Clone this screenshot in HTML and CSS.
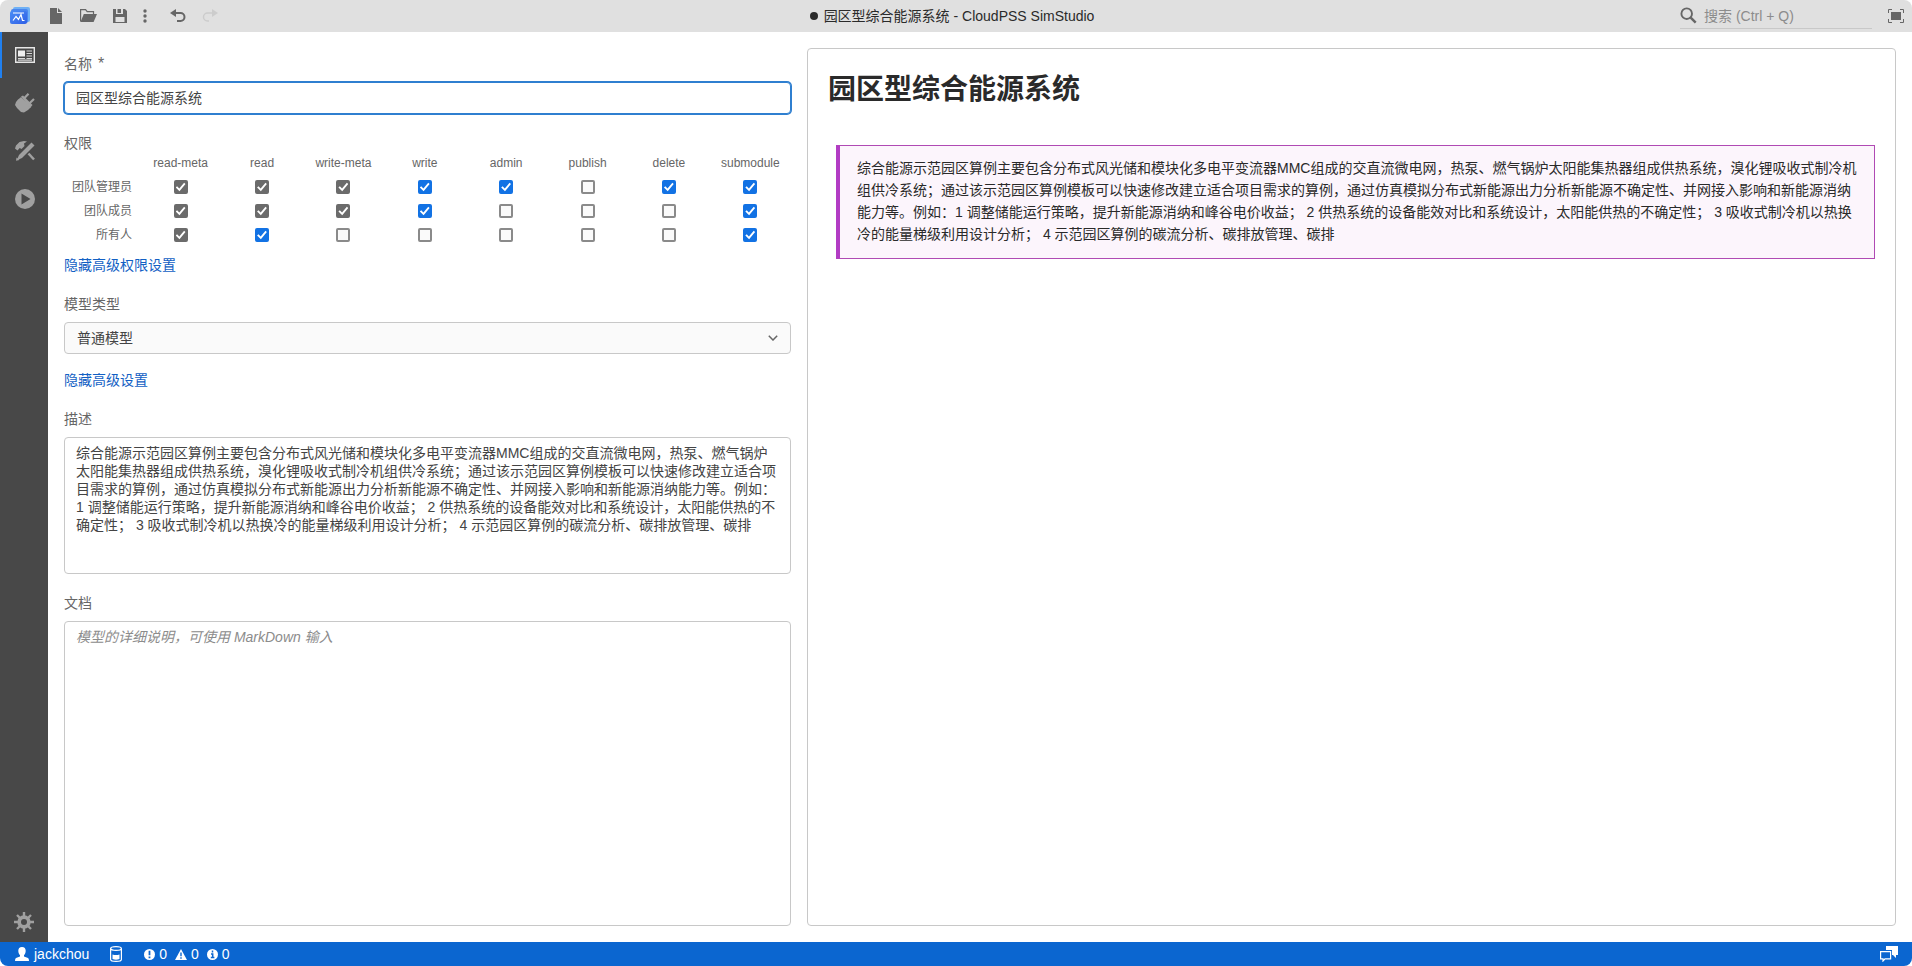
FILE: index.html
```html
<!DOCTYPE html>
<html lang="zh-CN">
<head>
<meta charset="utf-8">
<title>园区型综合能源系统 - CloudPSS SimStudio</title>
<link rel="stylesheet" href="styles.css">
</head>
<body>
<div class="app">
  <header class="topbar">
    <div class="tools">
      <svg class="logo" viewBox="0 0 20 18" aria-hidden="true">
        <defs>
          <linearGradient id="lg" x1="0" y1="0" x2="1" y2="1"><stop offset="0" stop-color="#4b8df5"/><stop offset="1" stop-color="#2f5fe6"/></linearGradient>
        </defs>
        <rect x="3" y="0" width="17" height="15" rx="2" fill="#6fb0f5"/>
        <rect x="1" y="2" width="17" height="14" rx="2" fill="#4a86ee"/>
        <rect x="0" y="4" width="17" height="13" rx="2" fill="url(#lg)"/>
        <path d="M3 6h11M3 13.500l3-4 2.500 3 2.500-5 1.500 6h2" fill="none" stroke="#fff" stroke-width="1.200"/>
      </svg>
      <button class="tool tool-new" aria-label="新建"><svg width="12" height="16" viewBox="0 0 12 16"><path d="M0 0h7v5h5v11H0z" fill="#666"/><path d="M8 0l4 4H8z" fill="#666"/></svg></button>
      <button class="tool tool-open" aria-label="打开"><svg width="17" height="14" viewBox="0 0 17 14"><path d="M.6 12.500V.7h5l1.600 2h6.300v2.500" fill="none" stroke="#666" stroke-width="1.200"/><path d="M3.800 5H17l-3.400 8H.5z" fill="#666"/></svg></button>
      <button class="tool tool-save" aria-label="保存"><svg width="14" height="14" viewBox="0 0 14 14"><path d="M0 0h12l2 2v12H0z" fill="#666"/><path d="M3 0h7v5H3zM2.500 8h9v5h-9z" fill="#e0e0e0"/><path d="M4.500 0h3.500v4H4.500z" fill="#666"/></svg></button>
      <button class="tool tool-more" aria-label="更多"><svg width="4" height="14" viewBox="0 0 4 14" fill="#666"><circle cx="2" cy="2" r="1.700"/><circle cx="2" cy="7" r="1.700"/><circle cx="2" cy="12" r="1.700"/></svg></button>
      <button class="tool tool-undo" aria-label="撤销"><svg width="16" height="14" viewBox="0 0 16 14"><path d="M6 0v8L0 4z" fill="#666"/><path d="M4 4h6.500a4 4 0 0 1 0 8H7" fill="none" stroke="#666" stroke-width="2"/></svg></button>
      <button class="tool tool-redo" aria-label="重做" disabled><svg width="16" height="14" viewBox="0 0 16 14"><path d="M10 0v8l6-4z" fill="#ccc"/><path d="M12 4H5.500a4 4 0 0 0 0 8H7" fill="none" stroke="#ccc" stroke-width="1.500"/></svg></button>
    </div>
    <div class="title"><span class="dirty"></span><span>园区型综合能源系统 - CloudPSS SimStudio</span></div>
    <div class="top-right">
      <label class="search">
        <svg width="17" height="17" viewBox="0 0 17 17" fill="none" stroke="#666"><circle cx="6.700" cy="6.700" r="5.300" stroke-width="1.900"/><path d="M10.700 10.700l5 5" stroke-width="2.500"/></svg>
        <input type="text" placeholder="搜索 (Ctrl + Q)" aria-label="搜索">
      </label>
      <button class="tool tool-full" aria-label="全屏"><svg width="16" height="14" viewBox="0 0 16 14"><path d="M3 3h10v8H3z" fill="#666"/><path d="M.5 4V.5H4M12 .5h3.500V4M15.500 10v3.500H12M4 13.500H.5V10" fill="none" stroke="#666"/></svg></button>
    </div>
  </header>

  <div class="body">
    <nav class="sidebar">
      <button class="side active" aria-label="总览"><svg width="20" height="16" viewBox="0 0 20 16"><path d="M.7.700h18.600v14.600H.7z" fill="none" stroke="#e6e6e6" stroke-width="1.400"/><path d="M3 3.500h7v6H3z" fill="#eee"/><path d="M11.500 4H17M11.500 6.500H17M11.500 9H17M3 11.500h7M11.500 11.500H17M3 13.200h14" stroke="#d8d8d8" stroke-width="1.200"/></svg></button>
      <button class="side" aria-label="接口"><svg width="20" height="20" viewBox="0 0 20 20" fill="#a0a0a0"><path d="M3 6.500l2-1.500 1-1 10 10-3 3-4 2.500-3-.5-4-4L0 12l1-3z"/><path d="M6 3.500l2-1L17.500 12l-2.500 3z"/><path d="M9 5.500L13.500.8M14 10.800l5-4.800" stroke="#a0a0a0" stroke-width="2.200"/></svg></button>
      <button class="side" aria-label="实现"><svg width="20" height="20" viewBox="0 0 20 20" fill="#a0a0a0"><path d="M0 7.500l1-3L4.500 1 9 0l3 .5-3 2 .5 2.500-3 3-1.800-1-2.200 2.500z"/><path d="M16.500 1.500l3 3L7 17l-4.500 2L2 18.500 4 14z"/><path d="M1.500 16.500l3 2.500-3.500.8z"/><path d="M13.500 12.500l5.500 6" stroke="#a0a0a0" stroke-width="2.500"/></svg></button>
      <button class="side" aria-label="运行"><svg width="20" height="20" viewBox="0 0 20 20"><circle cx="10" cy="10" r="10" fill="#a0a0a0"/><path d="M6.500 4.500v11l9-5.500z" fill="#484848"/></svg></button>
      <button class="side settings" aria-label="设置"><svg width="20" height="20" viewBox="0 0 20 20"><g stroke="#a0a0a0" stroke-width="2.400"><path d="M10 0v20M0 10h20M3 3l14 14M17 3L3 17"/></g><circle cx="10" cy="10" r="6.700" fill="#a0a0a0"/><circle cx="10" cy="10" r="3" fill="#484848"/></svg></button>
    </nav>

    <main class="main">
      <form class="form">
        <section class="field">
          <label class="label" for="name">名称 <span class="req">*</span></label>
          <input class="box name" id="name" type="text" value="园区型综合能源系统">
        </section>

        <section class="field">
          <div class="label tight" id="perm">权限</div>
          <table class="perms" aria-labelledby="perm">
            <thead><tr><td></td><th scope="col">read-meta</th><th scope="col">read</th><th scope="col">write-meta</th><th scope="col">write</th><th scope="col">admin</th><th scope="col">publish</th><th scope="col">delete</th><th scope="col">submodule</th></tr></thead>
            <tbody>
              <tr><th scope="row">团队管理员</th>
                <td><input type="checkbox" aria-label="团队管理员 read-meta" checked disabled></td>
                <td><input type="checkbox" aria-label="团队管理员 read" checked disabled></td>
                <td><input type="checkbox" aria-label="团队管理员 write-meta" checked disabled></td>
                <td><input type="checkbox" aria-label="团队管理员 write" checked></td>
                <td><input type="checkbox" aria-label="团队管理员 admin" checked></td>
                <td><input type="checkbox" aria-label="团队管理员 publish"></td>
                <td><input type="checkbox" aria-label="团队管理员 delete" checked></td>
                <td><input type="checkbox" aria-label="团队管理员 submodule" checked></td></tr>
              <tr><th scope="row">团队成员</th>
                <td><input type="checkbox" aria-label="团队成员 read-meta" checked disabled></td>
                <td><input type="checkbox" aria-label="团队成员 read" checked disabled></td>
                <td><input type="checkbox" aria-label="团队成员 write-meta" checked disabled></td>
                <td><input type="checkbox" aria-label="团队成员 write" checked></td>
                <td><input type="checkbox" aria-label="团队成员 admin"></td>
                <td><input type="checkbox" aria-label="团队成员 publish"></td>
                <td><input type="checkbox" aria-label="团队成员 delete"></td>
                <td><input type="checkbox" aria-label="团队成员 submodule" checked></td></tr>
              <tr><th scope="row">所有人</th>
                <td><input type="checkbox" aria-label="所有人 read-meta" checked disabled></td>
                <td><input type="checkbox" aria-label="所有人 read" checked></td>
                <td><input type="checkbox" aria-label="所有人 write-meta"></td>
                <td><input type="checkbox" aria-label="所有人 write"></td>
                <td><input type="checkbox" aria-label="所有人 admin"></td>
                <td><input type="checkbox" aria-label="所有人 publish"></td>
                <td><input type="checkbox" aria-label="所有人 delete"></td>
                <td><input type="checkbox" aria-label="所有人 submodule" checked></td></tr>
            </tbody>
          </table>
          <a class="link" href="#perm">隐藏高级权限设置</a>
        </section>

        <section class="field">
          <label class="label" for="kind">模型类型</label>
          <div class="select-wrap">
            <select class="box select" id="kind"><option>普通模型</option></select>
            <svg class="chevron" width="10" height="6" viewBox="0 0 10 6"><path d="M.8.800L5 5 9.200.800" fill="none" stroke="#666" stroke-width="1.500"/></svg>
          </div>
          <a class="link spaced" href="#kind">隐藏高级设置</a>
        </section>

        <section class="field">
          <label class="label" for="desc">描述</label>
          <textarea class="box area desc" id="desc">综合能源示范园区算例主要包含分布式风光储和模块化多电平变流器MMC组成的交直流微电网，热泵、燃气锅炉太阳能集热器组成供热系统，溴化锂吸收式制冷机组供冷系统；通过该示范园区算例模板可以快速修改建立适合项目需求的算例，通过仿真模拟分布式新能源出力分析新能源不确定性、并网接入影响和新能源消纳能力等。例如：1 调整储能运行策略，提升新能源消纳和峰谷电价收益； 2 供热系统的设备能效对比和系统设计，太阳能供热的不确定性； 3 吸收式制冷机以热换冷的能量梯级利用设计分析； 4 示范园区算例的碳流分析、碳排放管理、碳排</textarea>
        </section>

        <section class="field grow">
          <label class="label" for="doc">文档</label>
          <textarea class="box area doc" id="doc" placeholder="模型的详细说明，可使用 MarkDown 输入"></textarea>
        </section>
      </form>

      <article class="preview">
        <h1>园区型综合能源系统</h1>
        <blockquote>综合能源示范园区算例主要包含分布式风光储和模块化多电平变流器MMC组成的交直流微电网，热泵、燃气锅炉太阳能集热器组成供热系统，溴化锂吸收式制冷机组供冷系统；通过该示范园区算例模板可以快速修改建立适合项目需求的算例，通过仿真模拟分布式新能源出力分析新能源不确定性、并网接入影响和新能源消纳能力等。例如：1 调整储能运行策略，提升新能源消纳和峰谷电价收益； 2 供热系统的设备能效对比和系统设计，太阳能供热的不确定性； 3 吸收式制冷机以热换冷的能量梯级利用设计分析； 4 示范园区算例的碳流分析、碳排放管理、碳排</blockquote>
      </article>
    </main>
  </div>

  <footer class="status">
    <button class="stat user"><svg width="14" height="14" viewBox="0 0 14 14"><path d="M7 0c2.500 0 3.700 1.500 3.700 3.800C10.700 6 9.800 7.500 9 8.200v1.300l4 1.500q1 .5 1 3H0q0-2.500 1-3l4-1.500V8.200C4.200 7.500 3.300 6 3.300 3.800 3.300 1.500 4.500 0 7 0z" fill="#fff"/></svg>jackchou</button>
    <button class="stat storage" aria-label="存储"><svg width="12" height="16" viewBox="0 0 12 16"><path d="M.6 2.500v11c0 1 2.400 1.900 5.400 1.900s5.400-.9 5.400-1.900v-11" fill="none" stroke="#fff" stroke-width="1.200"/><ellipse cx="6" cy="2.500" rx="5.400" ry="1.900" fill="none" stroke="#fff" stroke-width="1.200"/><path d="M2.500 8.500q3.500 1.200 7 0v4.500q-3.500 1.300-7 0z" fill="#fff"/></svg></button>
    <button class="stat counts">
      <span class="count"><svg width="11" height="11" viewBox="0 0 11 11"><circle cx="5.500" cy="5.500" r="5.500" fill="#fff"/><path d="M5.500 1.800v4.400M5.500 7.400v1.800" stroke="#0b66d0" stroke-width="1.800"/></svg>0</span>
      <span class="count"><svg width="12" height="11" viewBox="0 0 12 11"><path d="M6 0l6 11H0z" fill="#fff"/><path d="M6 3.500v3.700M6 8.200v1.500" stroke="#0b66d0" stroke-width="1.400"/></svg>0</span>
      <span class="count"><svg width="11" height="11" viewBox="0 0 11 11"><circle cx="5.500" cy="5.500" r="5.500" fill="#fff"/><path d="M5.500 1.600v1.800M4 4.900h1.700v3.500M3.800 8.600h3.600" fill="none" stroke="#0b66d0" stroke-width="1.500"/></svg>0</span>
    </button>
    <button class="stat chat" aria-label="消息"><svg width="18" height="16" viewBox="0 0 18 16"><path d="M6 0h12v9h-2v3l-3-3h-1V4H6z" fill="#fff"/><path d="M.6 5.600h10v7.200H5L3 15v-2.200H.6z" fill="none" stroke="#fff" stroke-width="1.200"/></svg></button>
  </footer>
</div>
</body>
</html>
```

FILE: styles.css
```css
* { box-sizing: border-box; }

body {
  margin: 0;
  background: #fff;
  color: #333;
  font: 14px/20px "Liberation Sans", "Noto Sans CJK SC", sans-serif;
}

button {
  border: 0;
  padding: 0;
  background: none;
  color: inherit;
  font: inherit;
}

svg { display: block; flex: none; }

.app {
  display: flex;
  flex-direction: column;
  height: 100vh;
  border-radius: 8px;
  overflow: hidden;
}

/* top bar */
.topbar {
  display: grid;
  grid-template-columns: 1fr auto 1fr;
  align-items: center;
  height: 32px;
  padding-right: 8px;
  background: #e0e0e0;
}

.tools { display: flex; align-items: center; padding-left: 10px; }
.logo { width: 20px; height: 18px; }
.tool { display: flex; }
.tool-new { margin-left: 20px; }
.tool-open { margin-left: 18px; }
.tool-save { margin-left: 16px; }
.tool-more { margin-left: 16px; }
.tool-undo { margin-left: 23px; }
.tool-redo { margin-left: 16px; }

.title { display: flex; align-items: center; gap: 6px; color: #2a2a2a; }
.dirty { width: 8px; height: 8px; border-radius: 50%; background: #2a2a2a; }

.top-right { display: flex; align-items: center; justify-content: flex-end; gap: 16px; }
.search {
  display: flex;
  align-items: center;
  gap: 7px;
  width: 192px;
  height: 26px;
  border-bottom: 1px solid #c8c8c8;
}
.search input {
  flex: 1;
  min-width: 0;
  border: 0;
  padding: 0;
  background: none;
  font: inherit;
  outline: 0;
}
.search input::placeholder { color: #8c8c8c; }

/* body */
.body { display: flex; flex: 1; min-height: 0; }

.sidebar {
  display: flex;
  flex-direction: column;
  gap: 2px;
  width: 48px;
  background: #484848;
}
.side {
  display: flex;
  align-items: center;
  justify-content: center;
  height: 46px;
  border-left: 2px solid transparent;
}
.active { border-color: #2080f0; }
.settings { height: 40px; margin-top: auto; border: 0; }

.main {
  display: grid;
  grid-template-columns: 727fr 1089fr;
  gap: 16px;
  flex: 1;
  min-width: 0;
  padding: 16px;
}

/* form */
.form {
  display: flex;
  flex-direction: column;
  gap: 19px;
  min-width: 0;
  padding-top: 6px;
}
.field { display: flex; flex-direction: column; }
.grow { flex: 1; }
.label { height: 20px; margin-bottom: 8px; color: #666; }
.tight { margin-bottom: 0; }
.req { margin-left: 2px; font-size: 16px; }

.box {
  display: block;
  width: 100%;
  border: 1px solid #c8c8c8;
  border-radius: 4px;
  padding: 0 12px;
  background: #fff;
  color: #444;
  font: inherit;
  outline: 0;
}
.name {
  height: 32px;
  border-color: #2f7fd0;
  padding: 0 11px 3px;
  box-shadow: 0 0 0 1px #2f7fd0;
}
.select-wrap { display: grid; align-items: center; }
.select-wrap > * { grid-area: 1 / 1; }
.select { height: 32px; background: #fafafa; appearance: none; }
.chevron { justify-self: end; margin-right: 13px; pointer-events: none; }

.area { resize: none; padding: 6px 11px; line-height: 18px; overflow: hidden; }
.desc { height: 137px; }
.doc { flex: 1; }
.doc::placeholder { color: #8c8c8c; font-style: italic; }

.link { align-self: flex-start; margin-top: 8px; color: #1260c4; text-decoration: none; }
.spaced { margin-top: 16px; }

.perms {
  width: 100%;
  table-layout: fixed;
  border-collapse: collapse;
  color: #666;
  font-size: 12px;
}
.perms th, .perms td { padding: 0; font-weight: normal; text-align: center; }
.perms thead td { width: 76px; }
.perms thead tr { height: 22px; }
.perms thead th { vertical-align: top; }
.perms tbody tr { height: 24px; }
.perms tbody th { padding-right: 8px; text-align: right; }

.perms input {
  display: block;
  width: 14px;
  height: 14px;
  margin: 0 auto;
  border: 2px solid #8a8a8a;
  border-radius: 2px;
  background: #fafafa;
  appearance: none;
}
.perms input:checked { border-color: #1272e4; background: #1272e4; }
.perms input:checked:disabled { border-color: #6b6b6b; background: #6b6b6b; }
.perms input:checked::before {
  content: "";
  display: block;
  width: 10px;
  height: 10px;
  background: #fff;
  clip-path: polygon(0 56%, 14% 42%, 36% 64%, 84% 8%, 98% 20%, 38% 92%);
}

/* preview */
.preview {
  min-width: 0;
  border: 1px solid #c8c8c8;
  border-radius: 4px;
  padding: 21px 20px 20px;
}
.preview h1 {
  margin: 0 0 35px;
  color: #2a2a2a;
  font-size: 28px;
  line-height: 40px;
}
.preview blockquote {
  margin: 0 0 0 8px;
  border: 1px solid #b04ab4;
  border-left: 4px solid #b23cc4;
  padding: 11px 16px 13px 17px;
  background: #fcf5fc;
  color: #2a2a2a;
  line-height: 22px;
}

/* status bar */
.status {
  display: flex;
  align-items: center;
  height: 24px;
  padding: 0 14px 0 15px;
  background: #0b66d0;
  color: #fff;
}
.stat { display: flex; align-items: center; }
.user { gap: 5px; }
.storage { margin-left: 21px; }
.counts { gap: 8px; margin-left: 22px; }
.count { display: flex; align-items: center; gap: 4px; }
.chat { margin-left: auto; }
```
